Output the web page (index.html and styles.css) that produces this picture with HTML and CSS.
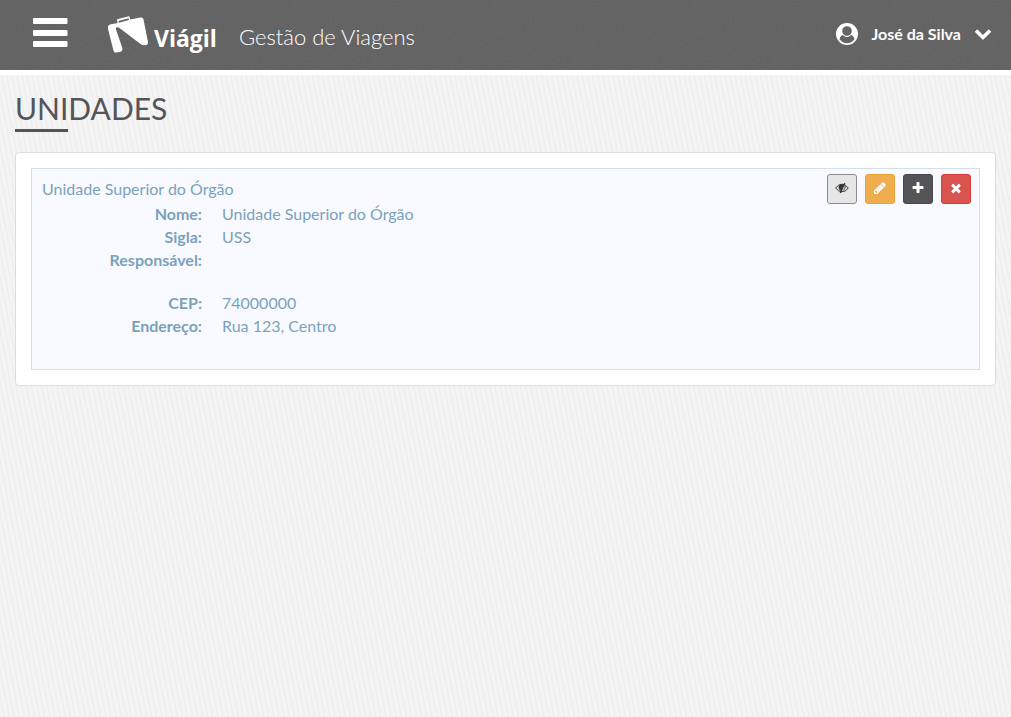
FILE: index.html
```html
<!DOCTYPE html>
<html lang="pt-BR">
<head>
<meta charset="utf-8">
<title>Viágil - Unidades</title>
<link rel="stylesheet" href="styles.css">
</head>
<body>
<header class="topbar">
  <button class="menu-toggle" type="button" aria-label="Menu">
    <svg class="icon-bars" viewBox="0 0 36 30"><rect x="1" y="0" width="34.500" height="6" rx="1"/><rect x="1" y="12" width="34.500" height="6" rx="1"/><rect x="1" y="23" width="34.500" height="6" rx="1"/></svg>
  </button>
  <a class="brand" href="#">
    <svg class="brand-mark" viewBox="0 0 42 38"><path fill-rule="evenodd" d="M1 10.500Q1.400 9.200 3 8.600L10.700 7 10 4.500Q9.800 3.400 11 3.100L21 .400Q22.400 0 22.800 1.400L23.400 3.600 33.500 1.500Q35.700 1 36.400 3L41 26Q41.200 28.700 38.700 29.200 36 29.500 33.500 28L12.500 12Q10.500 10.900 9.200 11.500 8.500 12 9 13.600L15.300 32Q16 34.800 13.500 35.700L9.500 36.600Q7.400 37 6.500 34.800L1 13ZM12 6.700L21.900 4 21.500 2.300 11.500 4.900Z"/></svg>
    <span class="brand-name">Viágil</span>
  </a>
  <span class="tagline">Gestão de Viagens</span>
  <button class="user-menu" type="button">
    <svg class="icon-user" viewBox="0 0 22 22"><path fill-rule="evenodd" d="M11 0A11 11 0 1 0 11 22 11 11 0 1 0 11 0ZM11 3.200A4.800 4.800 0 1 1 11 12.800 4.800 4.800 0 1 1 11 3.200ZM3.500 16.300C4 14.200 5 12.200 6.900 12Q8.700 14 11 14 13.300 14 15.100 12C17 12.200 18 14.200 18.500 16.300A9.200 9.200 0 0 1 3.500 16.300Z"/></svg>
    <span>José da Silva</span>
    <svg class="icon-chevron" viewBox="90 490 1612 1100"><path d="M1683 808l-742 741q-19 19-45 19t-45-19l-742-741q-19-19-19-45.500t19-45.500l166-165q19-19 45-19t45 19l531 531 531-531q19-19 45-19t45 19l166 165q19 19 19 45.500t-19 45.500z"/></svg>
  </button>
</header>

<main class="content">
  <h1 class="page-title">Unidades</h1>
  <section class="panel">
    <article class="unit">
      <div class="unit-head">
        <h2 class="unit-name">Unidade Superior do Órgão</h2>
        <div class="actions">
          <button class="btn btn-view" type="button" aria-label="Ocultar detalhes">
            <svg viewBox="0 0 14 14"><g fill="none" stroke="currentColor"><path d="M.7 7Q3.500 3.200 7 3.200 10.500 3.200 13.300 7 10.500 10.800 7 10.800 3.500 10.800.7 7Z"/><path stroke-width="1.300" d="M9.800 2L5.300 12"/><path d="M10 4.800Q10.800 7.500 8.300 9.300"/></g><path d="M8.600 3.500Q3.500 2.600 3.600 7 3.900 9 6 10Z"/></svg>
          </button>
          <button class="btn btn-edit" type="button" aria-label="Editar">
            <svg viewBox="0 0 1792 1792"><path d="M491 1536l91-91-235-235-91 91v107h128v128h107zm523-928q0-22-22-22-10 0-17 7l-542 542q-7 7-7 17 0 22 22 22 10 0 17-7l542-542q7-7 7-17zm-54-192l416 416-832 832h-416v-416zm683 96q0 53-37 90l-166 166-416-416 166-165q36-38 90-38 53 0 91 38l235 234q37 39 37 91z"/></svg>
          </button>
          <button class="btn btn-add" type="button" aria-label="Adicionar">
            <svg viewBox="0 0 1792 1792"><path d="M1600 736v192q0 40-28 68t-68 28h-416v416q0 40-28 68t-68 28h-192q-40 0-68-28t-28-68v-416h-416q-40 0-68-28t-28-68v-192q0-40 28-68t68-28h416v-416q0-40 28-68t68-28h192q40 0 68 28t28 68v416h416q40 0 68 28t28 68z"/></svg>
          </button>
          <button class="btn btn-delete" type="button" aria-label="Excluir">
            <svg viewBox="0 0 1792 1792"><path d="M1490 1322q0 40-28 68l-136 136q-28 28-68 28t-68-28l-294-294-294 294q-28 28-68 28t-68-28l-136-136q-28-28-28-68t28-68l294-294-294-294q-28-28-28-68t28-68l136-136q28-28 68-28t68 28l294 294 294-294q28-28 68-28t68 28l136 136q28 28 28 68t-28 68l-294 294 294 294q28 28 28 68z"/></svg>
          </button>
        </div>
      </div>
      <dl class="details">
        <dt>Nome:</dt><dd>Unidade Superior do Órgão</dd>
        <dt>Sigla:</dt><dd>USS</dd>
        <dt>Responsável:</dt><dd></dd>
      </dl>
      <dl class="details">
        <dt>CEP:</dt><dd>74000000</dd>
        <dt>Endereço:</dt><dd>Rua 123, Centro</dd>
      </dl>
    </article>
  </section>
</main>
</body>
</html>
```

FILE: styles.css
```css
* { box-sizing: border-box; }

body {
  margin: 0;
  min-height: 100vh;
  font-family: Lato, "Liberation Sans", sans-serif;
  font-size: 16px;
  line-height: 23px;
  color: #555557;
  background: repeating-linear-gradient(79deg, #f4f4f4 0 3px, #ebebeb 4px, #f4f4f4 5px);
}

button {
  font: inherit;
  padding: 0;
  cursor: pointer;
}

svg {
  display: block;
  fill: currentColor;
}

.topbar {
  display: flex;
  align-items: flex-start;
  min-height: 75px;
  padding: 0 20px 0 32px;
  color: #fff;
  border-bottom: 5px solid #fff;
  background-color: #5f5f60;
  background-image: url("data:image/svg+xml,%3Csvg xmlns='http://www.w3.org/2000/svg' width='100' height='70'%3E%3Cfilter id='n'%3E%3CfeTurbulence type='fractalNoise' baseFrequency='.6' numOctaves='2' stitchTiles='stitch'/%3E%3CfeColorMatrix type='saturate' values='0'/%3E%3C/filter%3E%3Crect width='100' height='70' filter='url(%23n)' opacity='.1'/%3E%3C/svg%3E");
}

.menu-toggle,
.user-menu {
  color: inherit;
  background: none;
  border: 0;
}

.menu-toggle { margin-top: 18px; }

.icon-bars {
  width: 36px;
  height: 30px;
}

.brand {
  display: flex;
  gap: 5px;
  margin: 16px 0 0 39px;
  color: inherit;
  text-decoration: none;
}

.brand-mark {
  width: 42px;
  height: 38px;
}

.brand-name {
  padding-top: 6px;
  font-family: "Open Sans", sans-serif;
  font-size: 23px;
  font-weight: 700;
  line-height: 32px;
}

.tagline {
  margin: 22px 0 0 22px;
  font-size: 22px;
  font-weight: 300;
  line-height: 30px;
}

.user-menu {
  display: flex;
  align-items: center;
  margin: 23px 0 0 auto;
  font-weight: 700;
}

.user-menu span { line-height: 22px; }

.icon-user {
  width: 22px;
  height: 22px;
  margin-right: 13px;
}

.icon-chevron {
  width: 16px;
  height: 11px;
  margin-left: 14px;
}

.content { padding: 16px 15px; }

.page-title {
  margin: 0 0 20px;
  padding-bottom: 4px;
  font-size: 30px;
  font-weight: 400;
  line-height: 34px;
  text-transform: uppercase;
}

.page-title::after {
  content: "";
  display: block;
  width: 53px;
  height: 3px;
  margin: 4px 0 -4px;
  background: #555557;
}

.panel {
  padding: 15px;
  background: #fff;
  border: 1px solid #ddd;
  border-radius: 4px;
}

.unit {
  padding: 5px 8px 12px 10px;
  color: #7ba2bb;
  background: #f9faff;
  border: 1px solid #d5dfe8;
}

.unit-head {
  display: flex;
  align-items: flex-start;
  justify-content: space-between;
  height: 28px;
}

.unit-name {
  margin: 3px 0 0;
  font-size: 16px;
  font-weight: 400;
}

.actions {
  display: flex;
  gap: 8px;
}

.btn {
  display: flex;
  align-items: center;
  justify-content: center;
  width: 30px;
  height: 30px;
  padding-bottom: 2px;
  color: #fff;
  border: 1px solid;
  border-radius: 3px;
}

.btn svg {
  width: 14px;
  height: 14px;
}

.btn-view { color: #333; background: #e6e6e6; border-color: #8c8c8c; }
.btn-edit { background: #f0ad4e; border-color: #eea236; }
.btn-add { background: #555557; border-color: #48484a; }
.btn-delete { background: #d9534f; border-color: #d43f3a; }

.details {
  display: grid;
  grid-template-columns: 160px 1fr;
  column-gap: 20px;
  grid-auto-rows: minmax(23px, auto);
  margin: 0 0 20px;
}

.details dt {
  font-weight: 700;
  text-align: right;
}

.details dd { margin: 0; }
```
